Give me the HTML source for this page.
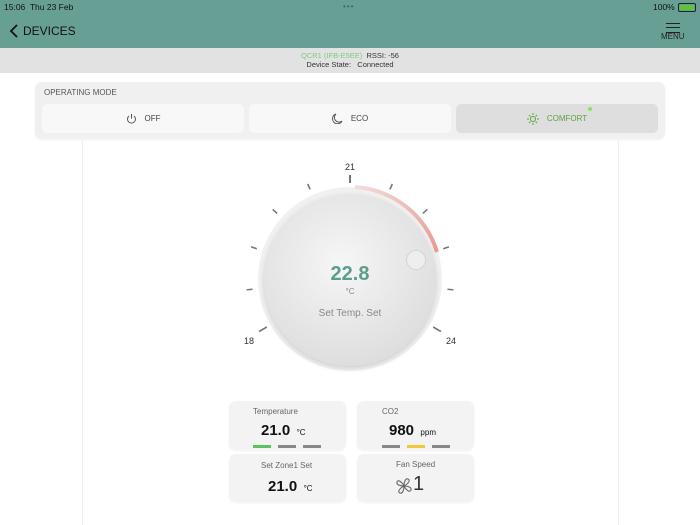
<!DOCTYPE html><html><head><style>
body{margin:0;width:700px;height:525px;overflow:hidden;background:#fff;font-family:"Liberation Sans",sans-serif;position:relative}
.a{position:absolute}
.card{position:absolute;background:#f3f3f3;border-radius:7px;box-shadow:0 1px 2px rgba(0,0,0,.06)}
.btn{position:absolute;top:104px;height:29px;width:202px;border-radius:5px;background:#f8f8f8;font-size:8px;color:#444;display:flex;align-items:center;justify-content:center;gap:8px}
.lbl{font-size:8px;color:#666}
</style></head><body>
<div class="a" style="left:0;top:0;width:700px;height:48px;background:#679f94"></div>
<div class="a" style="left:4px;top:2px;font-size:8.5px;color:#111">15:06&nbsp; Thu 23 Feb</div>
<div class="a" style="left:343px;top:2px;font-size:8px;color:#3d6a62;letter-spacing:1px">•••</div>
<div class="a" style="left:653px;top:2px;font-size:8.5px;color:#111">100%</div>
<div class="a" style="left:678px;top:3px;width:16px;height:7px;border:1px solid #222;border-radius:2px"><div style="width:14px;height:5px;margin:1px;background:#5ec43b"></div></div>
<svg class="a" style="left:8px;top:24px" width="12" height="14"><path d="M9 1L3 7l6 6" stroke="#111" stroke-width="1.8" fill="none"/></svg>
<div class="a" style="left:23px;top:24px;font-size:12px;color:#111">DEVICES</div>
<div class="a" style="left:666px;top:23px;width:14px;height:8px;border-top:1.2px solid #222;border-bottom:1.2px solid #222"></div>
<div class="a" style="left:666px;top:27px;width:14px;height:1.2px;background:#222"></div>
<div class="a" style="left:661px;top:32px;font-size:8px;color:#222">MENU</div>
<div class="a" style="left:0;top:48px;width:700px;height:25px;background:#e2e2e2"></div>
<div class="a" style="left:0;top:51px;width:700px;text-align:center;font-size:7.5px;color:#333"><span style="color:#7fc97f">QCR1 (IFB-E5EE)</span>&nbsp; RSSI: -56<br>Device State:&nbsp;&nbsp; Connected</div>
<div class="a" style="left:82px;top:140px;width:535px;height:385px;border-left:1px solid #f0f0f0;border-right:1px solid #f0f0f0"></div>
<div class="card" style="left:35px;top:82px;width:630px;height:57px;background:#f0f0f0"></div>
<div class="a lbl" style="left:44px;top:88px;color:#555">OPERATING MODE</div>
<div class="btn" style="left:42px"><svg width="11" height="11"><path d="M3 3a4 4 0 1 0 5 0M5.5 1v4.5" stroke="#555" fill="none"/></svg>OFF</div>
<div class="btn" style="left:249px"><svg width="11" height="11"><path d="M4 1a5 5 0 1 0 6 7A4 4 0 0 1 4 1z" stroke="#555" fill="none"/></svg>ECO</div>
<div class="btn" style="left:456px;background:#dedede;color:#5fa33f"><svg width="12" height="12"><circle cx="6" cy="6" r="2.5" stroke="#5fa33f" fill="none"/><path d="M6 0v2M6 10v2M0 6h2M10 6h2M2 2l1.4 1.4M8.6 8.6L10 10M2 10l1.4-1.4M8.6 3.4L10 2" stroke="#5fa33f"/></svg>COMFORT</div>
<div class="a" style="left:588px;top:107px;width:4px;height:4px;border-radius:50%;background:#8fe05a"></div>
<svg class="a" style="left:0;top:0" width="700" height="525">
<defs><radialGradient id="g" cx="45%" cy="40%" r="65%"><stop offset="0" stop-color="#f6f6f6"/><stop offset="1" stop-color="#dcdcdc"/></radialGradient></defs>
<g stroke="#777" stroke-width="1.6">
<g transform="translate(350 279)">
<line x1="0" y1="-96" x2="0" y2="-104" stroke-width="2"/>
<line x1="0" y1="-98" x2="0" y2="-104" transform="rotate(-24)"/><line x1="0" y1="-98" x2="0" y2="-104" transform="rotate(-48)"/><line x1="0" y1="-98" x2="0" y2="-104" transform="rotate(-72)"/><line x1="0" y1="-98" x2="0" y2="-104" transform="rotate(-96)"/><line x1="0" y1="-96" x2="0" y2="-105" transform="rotate(-120)"/>
<line x1="0" y1="-98" x2="0" y2="-104" transform="rotate(24)"/><line x1="0" y1="-98" x2="0" y2="-104" transform="rotate(48)"/><line x1="0" y1="-98" x2="0" y2="-104" transform="rotate(72)"/><line x1="0" y1="-98" x2="0" y2="-104" transform="rotate(96)"/><line x1="0" y1="-96" x2="0" y2="-105" transform="rotate(120)"/>
</g></g>
<circle cx="350" cy="279" r="92" fill="#f1f1f1"/>
<defs><linearGradient id="r" x1="0" y1="0" x2="1" y2="1"><stop offset="0" stop-color="#f3dcd9"/><stop offset="1" stop-color="#e89a93"/></linearGradient></defs>
<path d="M355 187A92 92 0 0 1 437 252" stroke="url(#r)" stroke-width="4" fill="none"/>
<circle cx="350" cy="280" r="86" fill="url(#g)" style="filter:drop-shadow(0 2px 3px rgba(0,0,0,.15))"/>
<circle cx="416" cy="260" r="9.5" fill="#eee" stroke="#d4d4d4"/>
<text x="350" y="170" font-size="9" fill="#333" text-anchor="middle" font-family="Liberation Sans">21</text>
<text x="249" y="344" font-size="9" fill="#333" text-anchor="middle" font-family="Liberation Sans">18</text>
<text x="451" y="344" font-size="9" fill="#333" text-anchor="middle" font-family="Liberation Sans">24</text>
<text x="350" y="280" font-size="20" font-weight="bold" fill="#5a9e8d" text-anchor="middle" font-family="Liberation Sans">22.8</text>
<text x="350" y="294" font-size="8" fill="#888" text-anchor="middle" font-family="Liberation Sans">°C</text>
<text x="350" y="316" font-size="10" fill="#888" text-anchor="middle" font-family="Liberation Sans">Set Temp. Set</text>
</svg>
<div class="card" style="left:229px;top:401px;width:117px;height:49px"></div>
<div class="a lbl" style="left:253px;top:407px">Temperature</div>
<div class="a" style="left:261px;top:422px;font-size:15px;font-weight:bold;color:#111">21.0 <span style="font-size:8px;font-weight:normal">&nbsp;°C</span></div>
<div class="a" style="left:253px;top:445px;width:18px;height:3px;background:#5cc25a"></div>
<div class="a" style="left:278px;top:445px;width:18px;height:3px;background:#888"></div>
<div class="a" style="left:303px;top:445px;width:18px;height:3px;background:#888"></div>
<div class="card" style="left:357px;top:401px;width:117px;height:49px"></div>
<div class="a lbl" style="left:382px;top:407px">CO2</div>
<div class="a" style="left:389px;top:422px;font-size:15px;font-weight:bold;color:#111">980 <span style="font-size:8px;font-weight:normal">&nbsp;ppm</span></div>
<div class="a" style="left:382px;top:445px;width:18px;height:3px;background:#888"></div>
<div class="a" style="left:407px;top:445px;width:18px;height:3px;background:#f3c73b"></div>
<div class="a" style="left:432px;top:445px;width:18px;height:3px;background:#888"></div>
<div class="card" style="left:229px;top:454px;width:117px;height:48px"></div>
<div class="a lbl" style="left:261px;top:461px">Set Zone1 Set</div>
<div class="a" style="left:268px;top:478px;font-size:15px;font-weight:bold;color:#111">21.0 <span style="font-size:8px;font-weight:normal">&nbsp;°C</span></div>
<div class="card" style="left:357px;top:454px;width:117px;height:48px"></div>
<div class="a lbl" style="left:396px;top:460px">Fan Speed</div>
<svg class="a" style="left:395px;top:477px" width="18" height="18"><g stroke="#666" stroke-width="1.1" fill="none"><path d="M9 9C7 5 3 2 2 5S6 9 9 9"/><path d="M9 9C13 7 16 3 13 2S9 6 9 9"/><path d="M9 9C11 13 15 16 16 13S12 9 9 9"/><path d="M9 9C5 11 2 15 5 16S9 12 9 9"/></g></svg>
<div class="a" style="left:413px;top:473px;font-size:20px;color:#333">1</div>
</body></html>
